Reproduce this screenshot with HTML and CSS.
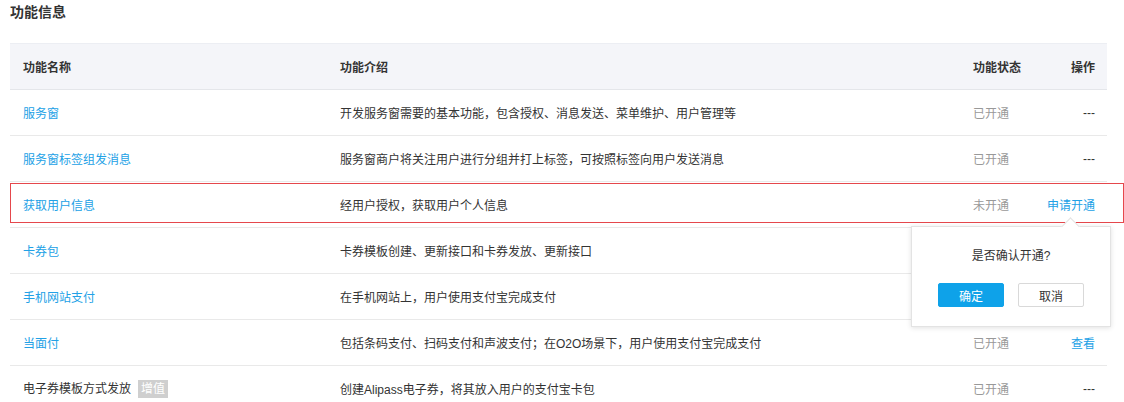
FILE: index.html
```html
<!DOCTYPE html>
<html lang="zh-CN">
<head>
    <meta charset="UTF-8">
    <title>功能信息</title>
    <link rel="stylesheet" href="styles.css">
</head>
<body>
    <div class="page">
        <h2 class="section-title">功能信息</h2>

        <div class="table-wrap">
            <table class="func-table">
                <colgroup>
                    <col class="col-name">
                    <col class="col-intro">
                    <col class="col-status">
                    <col class="col-action">
                </colgroup>
                <thead>
                    <tr>
                        <th>功能名称</th>
                        <th>功能介绍</th>
                        <th>功能状态</th>
                        <th class="cell-action">操作</th>
                    </tr>
                </thead>
                <tbody>
                    <tr>
                        <td><a class="link">服务窗</a></td>
                        <td>开发服务窗需要的基本功能，包含授权、消息发送、菜单维护、用户管理等</td>
                        <td class="status">已开通</td>
                        <td class="cell-action">---</td>
                    </tr>
                    <tr>
                        <td><a class="link">服务窗标签组发消息</a></td>
                        <td>服务窗商户将关注用户进行分组并打上标签，可按照标签向用户发送消息</td>
                        <td class="status">已开通</td>
                        <td class="cell-action">---</td>
                    </tr>
                    <tr>
                        <td><a class="link">获取用户信息</a></td>
                        <td>经用户授权，获取用户个人信息</td>
                        <td class="status">未开通</td>
                        <td class="cell-action">
                            <span class="pop-anchor">
                                <a class="link">申请开通</a>
                                <!-- 确认弹层 -->
                                <div class="popconfirm">
                                    <div class="popconfirm-title">是否确认开通?</div>
                                    <div class="popconfirm-btns">
                                        <button class="btn btn-primary">确定</button>
                                        <button class="btn">取消</button>
                                    </div>
                                </div>
                            </span>
                        </td>
                    </tr>
                    <!-- 下面两行的状态/操作被弹层盖住 -->
                    <tr>
                        <td><a class="link">卡券包</a></td>
                        <td>卡券模板创建、更新接口和卡券发放、更新接口</td>
                        <td class="status"></td>
                        <td class="cell-action"></td>
                    </tr>
                    <tr>
                        <td><a class="link">手机网站支付</a></td>
                        <td>在手机网站上，用户使用支付宝完成支付</td>
                        <td class="status"></td>
                        <td class="cell-action"></td>
                    </tr>
                    <tr>
                        <td><a class="link">当面付</a></td>
                        <td>包括条码支付、扫码支付和声波支付；在O2O场景下，用户使用支付宝完成支付</td>
                        <td class="status">已开通</td>
                        <td class="cell-action"><a class="link">查看</a></td>
                    </tr>
                    <tr>
                        <td>电子券模板方式发放<span class="tag">增值</span></td>
                        <td>创建Alipass电子券，将其放入用户的支付宝卡包</td>
                        <td class="status">已开通</td>
                        <td class="cell-action">---</td>
                    </tr>
                </tbody>
            </table>

            <!-- 标注框 -->
            <div class="row-mark"></div>
        </div>
    </div>
</body>
</html>
```

FILE: styles.css
```css
* {
    margin: 0;
    padding: 0;
    box-sizing: border-box;
}

body {
    font-family: "Liberation Sans", "Noto Sans CJK SC", sans-serif;
    font-size: 12px;
    color: #333333;
    background: #ffffff;
    overflow: hidden;
}

.page {
    padding: 0 10px;
}

.section-title {
    font-size: 14px;
    font-weight: bold;
    line-height: 24px;
    color: #333333;
    margin-bottom: 19px;
}

.table-wrap {
    position: relative;
    width: 1097px;
}

.func-table {
    width: 1097px;
    table-layout: fixed;
    border-collapse: collapse;
}

.col-name { width: 317px; }
.col-intro { width: 633px; }
.col-status { width: 80px; }
.col-action { width: 67px; }

.func-table th,
.func-table td {
    height: 46px;
    padding: 0 13px;
    text-align: left;
    vertical-align: middle;
    white-space: nowrap;
    border-bottom: 1px solid #e9e9e9;
}

.func-table thead th {
    background: #f4f5f9;
    font-weight: bold;
    color: #333333;
    border-top: 1px solid #eceef3;
    border-bottom: 1px solid #e4e6ea;
}

.func-table .cell-action {
    text-align: right;
    padding: 0 12px 0 0;
    overflow: visible;
}

.status {
    color: #999999;
}

.link {
    color: #22a1e6;
    cursor: pointer;
    text-decoration: none;
}

.tag {
    display: inline-block;
    margin-left: 7px;
    padding: 0 3px;
    line-height: 18px;
    background: #cfcfcf;
    color: #ffffff;
    vertical-align: middle;
}

.row-mark {
    position: absolute;
    left: 0;
    top: 140px;
    width: 1114px;
    height: 40px;
    border: 1px solid #e5474c;
    pointer-events: none;
}

.pop-anchor {
    position: relative;
    display: inline-block;
}

.popconfirm {
    position: absolute;
    top: 30px;
    right: -16px;
    width: 200px;
    height: 101px;
    background: #ffffff;
    border: 1px solid #e3e3e3;
    box-shadow: 0 1px 5px rgba(0, 0, 0, 0.12);
    text-align: center;
    z-index: 2;
}

.popconfirm::before {
    content: "";
    position: absolute;
    top: -7px;
    left: 152px;
    width: 12px;
    height: 12px;
    background: #ffffff;
    border-top: 1px solid #e3e3e3;
    border-left: 1px solid #e3e3e3;
    transform: rotate(45deg);
}

.popconfirm-title {
    margin-top: 20px;
    line-height: 18px;
    color: #333333;
}

.popconfirm-btns {
    display: flex;
    justify-content: center;
    gap: 14px;
    margin-top: 18px;
}

.btn {
    width: 66px;
    height: 24px;
    font-family: inherit;
    font-size: 12px;
    color: #333333;
    background: #ffffff;
    border: 1px solid #d9d9d9;
    border-radius: 2px;
    cursor: pointer;
}

.btn-primary {
    background: #0ea2e9;
    border-color: #0ea2e9;
    color: #ffffff;
}
```
